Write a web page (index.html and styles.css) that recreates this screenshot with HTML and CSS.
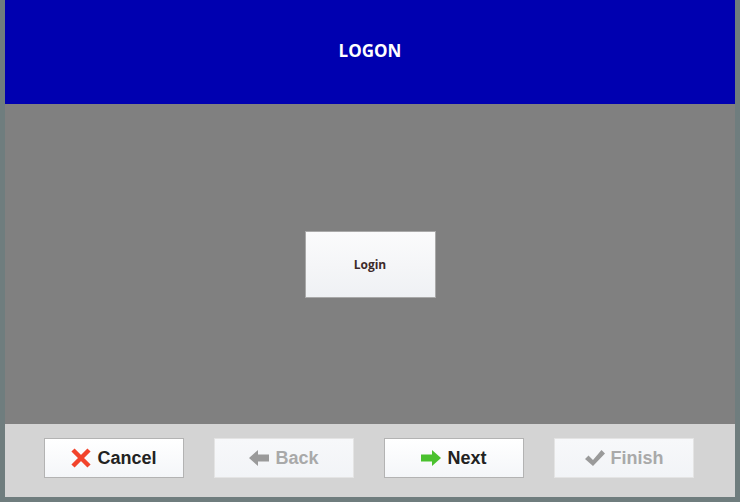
FILE: index.html
```html
<!DOCTYPE html>
<html lang="en">

<head>
    <meta charset="UTF-8">
    <meta name="viewport" content="width=device-width, initial-scale=1.0">
    <title>Logon</title>
    <link rel="stylesheet" href="styles.css">
</head>

<body>
    <div class="window">
        <!-- Header -->
        <div class="header">LOGON</div>

        <!-- Main area -->
        <div class="main">
            <button class="login-btn">Login</button>
        </div>

        <!-- Wizard buttons -->
        <div class="footer">
            <button class="wiz-btn">
                <svg class="icon" width="20" height="20" viewBox="0 0 20 20">
                    <path d="M2 2 L18 18 M18 2 L2 18" stroke="#f2432b" stroke-width="4.5" fill="none"/>
                </svg>
                Cancel
            </button>
            <button class="wiz-btn disabled">
                <svg class="icon" width="20" height="20" viewBox="0 0 20 20">
                    <path d="M0 10 L9 2 L9 6.5 L20 6.5 L20 13.5 L9 13.5 L9 18 Z" fill="#9a9a9a"/>
                </svg>
                Back
            </button>
            <button class="wiz-btn">
                <svg class="icon" width="20" height="20" viewBox="0 0 20 20">
                    <path d="M20 10 L11 2 L11 6.5 L0 6.5 L0 13.5 L11 13.5 L11 18 Z" fill="#4ac12e"/>
                </svg>
                Next
            </button>
            <button class="wiz-btn disabled">
                <svg class="icon" width="20" height="20" viewBox="0 0 20 20">
                    <path d="M0 11 L3.5 7.5 L8 12 L16.5 2 L20 5.5 L8 18 Z" fill="#9a9a9a"/>
                </svg>
                Finish
            </button>
        </div>
    </div>
    <div class="taskbar"></div>
</body>

</html>
```

FILE: styles.css
```css
body {
    margin: 0;
    padding: 0;
    background-color: #ffffff;
    font-family: "Open Sans", Arial, sans-serif;
    overflow: hidden;
}

.window {
    width: 730px;
    height: 497px;
    border: 5px solid #6f7d7e;
    border-top: none;
    display: flex;
    flex-direction: column;
}

.header {
    height: 104px;
    background-color: #0000b0;
    color: white;
    font-weight: bold;
    font-size: 17px;
    display: flex;
    align-items: center;
    justify-content: center;
    padding-bottom: 4px;
    box-sizing: border-box;
}

.main {
    height: 320px;
    background-color: #808080;
    display: flex;
    align-items: center;
    justify-content: center;
}

.login-btn {
    width: 131px;
    height: 67px;
    margin-top: 1px;
    background: linear-gradient(#fbfbfc, #eff1f4);
    border: 1px solid #a9a9a9;
    font-family: "Open Sans", Arial, sans-serif;
    font-weight: bold;
    font-size: 12px;
    color: #3d2a2a;
    padding: 0;
}

.footer {
    flex: 1;
    background-color: #d4d4d4;
    display: flex;
    gap: 30px;
    padding: 14px 0 0 39px;
    box-sizing: border-box;
}

.wiz-btn {
    width: 140px;
    height: 40px;
    background: linear-gradient(#ffffff, #f4f6f9);
    border: 1px solid #b3b3b3;
    font-family: "Liberation Sans", Arial, sans-serif;
    font-weight: bold;
    font-size: 18px;
    color: #222222;
    display: flex;
    align-items: center;
    justify-content: center;
    gap: 6px;
    padding: 0;
}

.wiz-btn.disabled {
    border-color: #e4e4e4;
    background: linear-gradient(#f7f8fa, #f2f4f7);
    color: #a9a9a9;
}

.icon {
    display: block;
}

.taskbar {
    height: 2px;
    background-color: #ffffff;
}
```
